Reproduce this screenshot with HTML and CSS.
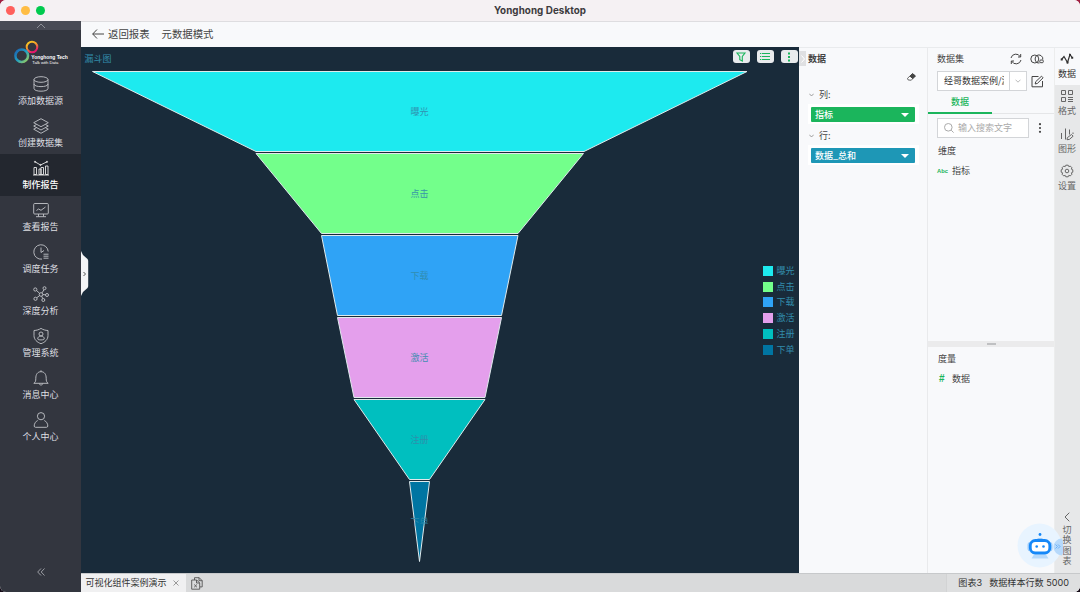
FILE: index.html
```html
<!DOCTYPE html>
<html lang="zh-CN">
<head>
<meta charset="utf-8">
<title>Yonghong Desktop</title>
<link rel="stylesheet" href="styles.css">
</head>
<body>
<div class="window">
  <header class="titlebar">
    <div class="lights"><i class="red"></i><i class="yellow"></i><i class="green"></i></div>
    <h1>Yonghong Desktop</h1>
  </header>
  <div class="body">
    <nav class="sidebar">
      <div class="scroll-up"><svg width="10" height="6" viewBox="0 0 10 6"><path d="M1 5l4-4 4 4"/></svg></div>
      <div class="logo">
        <svg width="60" height="30" viewBox="0 0 60 30">
          <defs>
            <linearGradient id="warm" x1="0" y1="0" x2=".5" y2="1"><stop offset="0" stop-color="#f6d11f"/><stop offset=".5" stop-color="#f39a2b"/><stop offset="1" stop-color="#e5176d"/></linearGradient>
            <linearGradient id="cool" x1="0" y1="0" x2="1" y2="1"><stop offset="0" stop-color="#1d5fae"/><stop offset=".5" stop-color="#1e9fc4"/><stop offset="1" stop-color="#a5d455"/></linearGradient>
          </defs>
          <circle cx="18" cy="8" r="5.300" fill="none" stroke="url(#warm)" stroke-width="2"/>
          <circle cx="7.700" cy="16.700" r="6.300" fill="none" stroke="url(#cool)" stroke-width="2.500"/>
          <text class="brand" x="17.300" y="20" textLength="36.500" lengthAdjust="spacingAndGlyphs">Yonghong Tech</text>
          <text class="motto" x="18.300" y="25.300" textLength="26" lengthAdjust="spacingAndGlyphs">Talk with Data</text>
        </svg>
      </div>
      <a class="item"><svg viewBox="0 0 16 16"><ellipse cx="8" cy="3.500" rx="7" ry="2.800"/><path d="M1 3.500v9c0 3.600 14 3.600 14 0v-9M1 8c0 3.500 14 3.500 14 0"/></svg><span>添加数据源</span></a>
      <a class="item"><svg viewBox="0 0 16 16"><path d="M8 .7l7.300 4L8 8.700l-7.300-4zM3.500 6.500L.7 8 8 12l7.300-4-2.800-1.500M3.500 9.700L.7 11.200 8 15.300l7.300-4.100-2.800-1.500"/></svg><span>创建数据集</span></a>
      <a class="item active"><svg viewBox="0 0 16 16"><path d="M1 7.500h2.500v7H1zM6 9h2v5.500H6zM8 7.500h2.500v7H8zM12.500 6H15v8.500h-2.500zM0 15h16M2 1.800L7.500 5 14 1.800"/><circle cx="2" cy="1.800" r=".6"/><circle cx="7.500" cy="5" r=".6"/><circle cx="14" cy="1.800" r=".6"/></svg><span>制作报告</span></a>
      <a class="item"><svg viewBox="0 0 16 16"><rect x=".7" y="1.500" width="14.600" height="10.500" rx="1"/><path d="M3.500 8.500l2-1.500 2.500 1.300L12.500 5M5.500 12v2.500M10.500 12v2.500M3 14.700h10"/></svg><span>查看报告</span></a>
      <a class="item"><svg viewBox="0 0 16 16"><path d="M15.200 7.500A7.200 7.200 0 1 0 9 15.100M8 3.500v5l3-2M10.500 10.200h5M10.500 12.200h5M10.500 14.200h5"/></svg><span>调度任务</span></a>
      <a class="item"><svg viewBox="0 0 16 16"><circle cx="8" cy="8.500" r="1.800"/><circle cx="2.300" cy="3.500" r="1.600"/><circle cx="11.500" cy="2.200" r="1.500"/><circle cx="14" cy="9" r="1.500"/><circle cx="2.500" cy="12.800" r="1.600"/><circle cx="10.300" cy="14" r="1.500"/><path d="M3.500 4.500l3.100 2.800M11 3.700L9 6.900M9.800 8.600l2.700.2M6.600 9.600l-2.900 2.200M8.700 10.200l1 2.400"/></svg><span>深度分析</span></a>
      <a class="item"><svg viewBox="0 0 16 16"><path d="M8 .4c2 1.300 4.400 2 7 2.100v5c0 4-3 6.800-7 8.200-4-1.400-7-4.200-7-8.200v-5C3.600 2.400 6 1.700 8 .4z"/><circle cx="8" cy="6" r="2"/><path d="M4.700 11c0-4 6.600-4 6.600 0 0 1.200-6.600 1.200-6.600 0z"/></svg><span>管理系统</span></a>
      <a class="item"><svg viewBox="0 0 16 16"><path d="M.8 13.300h14.400c-1.700-1-2-2.300-2-5C13.200 4.500 11.500 1.700 8 1.700S2.800 4.500 2.800 8.300c0 2.700-.3 4-2 5zM8 .3v1.400M6.300 13.500c0 2 3.400 2 3.400 0"/></svg><span>消息中心</span></a>
      <a class="item"><svg viewBox="0 0 16 16"><circle cx="8" cy="4.200" r="3.600"/><path d="M4.700 8.500c-2 .8-3.500 3.200-3.500 5.500 0 .8.500 1.300 1.300 1.300h11c.8 0 1.300-.5 1.300-1.300 0-2.300-1.500-4.700-3.500-5.500"/></svg><span>个人中心</span></a>
      <div class="collapse"><svg width="8" height="8" viewBox="0 0 8 8"><path d="M4 .5L.7 4 4 7.500M7.500.5L4.200 4l3.300 3.500"/></svg></div>
    </nav>

    <div class="main">
      <div class="toolbar">
        <svg width="12" height="10" viewBox="0 0 12 10"><path d="M5 .5L.7 5 5 9.500M.7 5H12"/></svg>
        <span>返回报表</span><span class="mode">元数据模式</span>
      </div>
      <div class="workspace">
        <section class="chart">
          <svg class="funnel" width="718" height="526" viewBox="81 47 718 526">
            <g class="shapes">
              <path fill="#1deaef" d="M92.500 71.500H747L584 151.500H256z"/>
              <path fill="#73ff8b" d="M256 153.500H583.500L518 233.500H321.500z"/>
              <path fill="#2fa3f6" d="M321.500 235.500H518L501.500 315.500H337.500z"/>
              <path fill="#e49fec" d="M337.500 317.500H501.500L485 397.500H354z"/>
              <path fill="#00bfbf" d="M354 399.500H485L429.500 479.500H409.500z"/>
              <path fill="#0075a2" d="M409.500 481.500H429.500L419.500 561.500z"/>
            </g>
            <text class="head" x="84.500" y="62">漏斗图</text>
            <g class="labels">
              <text x="419.500" y="114.500">曝光</text><text x="419.500" y="196.500">点击</text><text x="419.500" y="278.500">下载</text>
              <text x="419.500" y="360.500">激活</text><text x="419.500" y="442.500">注册</text><text x="419.500" y="524.500">下单</text>
            </g>
          </svg>
          <div class="chart-tools">
            <button><svg viewBox="0 0 12 10"><path d="M2 1h8L7.300 4.500V9L4.800 7.700V4.500z"/></svg></button>
            <button><svg viewBox="0 0 12 10"><path d="M1 1.500h1.300M3 1.500h8M1 4.500h1.300M3 4.500h8M1 7.500h1.300M3 7.500h8"/></svg></button>
            <button><svg viewBox="0 0 12 10"><path class="dots" d="M5 .5h2v2H5zM5 4h2v2H5zM5 7.500h2v2H5z"/></svg></button>
          </div>
          <ul class="legend">
            <li><i class="c1"></i>曝光</li><li><i class="c2"></i>点击</li><li><i class="c3"></i>下载</li>
            <li><i class="c4"></i>激活</li><li><i class="c5"></i>注册</li><li><i class="c6"></i>下单</li>
          </ul>
          <svg class="drawer" width="8" height="46" viewBox="0 0 8 46"><path fill="#f4f5f6" d="M0 0l2 4 4.500 4q.7 1 .7 2v25q0 1-.7 2L2 41l-2 4z"/><path fill="none" stroke="#555" d="M2.500 21L4.500 23 2.500 25"/></svg>
        </section>

        <section class="binding">
          <div class="tag"><svg width="4" height="8" viewBox="0 0 4 8"><path d="M.5.5L3.500 4 .5 7.500"/></svg></div>
          <h2>数据</h2>
          <div class="erase"><svg width="9" height="8" viewBox="0 0 9 8"><path d="M5.500.7l2.800 2.200-4 4.300L1.200 7 .5 5.300z" fill="#fff" stroke="#444" stroke-width=".8"/><path fill="#444" d="M5.500.7l2.800 2.200L5.800 5.600 3 3.200z"/></svg></div>
          <div class="field"><svg width="5" height="4" viewBox="0 0 5 4"><path d="M.3.700L2.500 3 4.700.7"/></svg>列:</div>
          <div class="slot"><div class="pill dim">指标<i></i></div></div>
          <div class="field"><svg width="5" height="4" viewBox="0 0 5 4"><path d="M.3.700L2.500 3 4.700.7"/></svg>行:</div>
          <div class="slot"><div class="pill mea">数据_总和<i></i></div></div>
        </section>

        <section class="dataset">
          <div class="ds-head"><span>数据集</span>
            <svg width="12" height="12" viewBox="0 0 12 12"><path d="M1 5a5 5 0 0 1 9.300-1.200M11 7a5 5 0 0 1-9.300 1.200M10.700 1v3H8M1.300 11V8H4"/></svg>
            <svg width="14" height="10" viewBox="0 0 14 10"><circle cx="4.800" cy="5" r="4"/><path d="M6.800 1.500a4 4 0 0 1 6 4M6.800 8.500a4 4 0 0 0 2.700.4M6.800 1.500a4.500 4.500 0 0 0 0 7"/><rect x="9.800" y="6" width="3.500" height="2.700" rx="1"/></svg>
          </div>
          <div class="ds-pick">
            <div class="select"><span>经哥数据案例/漏</span><b><svg width="6" height="4" viewBox="0 0 6 4"><path d="M.5.700L3 3.200 5.500.7"/></svg></b></div>
            <svg width="13" height="13" viewBox="0 0 13 13"><path d="M7.500 1.500H1v10.300h10.500V6M4.200 9l.5-2.300 5.800-5.500 1.600 1.600L6.400 8.400z"/></svg>
          </div>
          <div class="ds-tabs"><span>数据</span></div>
          <div class="search">
            <label><svg width="10" height="10" viewBox="0 0 10 10"><circle cx="4.300" cy="4.300" r="3.800"/><path d="M7.200 7.200L9.600 9.600"/></svg>输入搜索文字</label>
            <svg class="more" width="4" height="10" viewBox="0 0 4 10"><circle cx="2" cy="1.200" r="1.100"/><circle cx="2" cy="5" r="1.100"/><circle cx="2" cy="8.800" r="1.100"/></svg>
          </div>
          <h3>维度</h3>
          <div class="row"><b>Abc</b>指标</div>
          <div class="splitter"><i></i></div>
          <h3 class="measure">度量</h3>
          <div class="row"><b class="hash">#</b>数据</div>
        </section>

        <aside class="rail">
          <a class="on"><svg viewBox="0 0 14 14"><path stroke-width="1.200" d="M1.500 7.500L4 4.500l3.500 6 2.500-8 2 3"/><path d="M.7 6.500h2v2h-2zM6.500 9.500h2v2h-2zM9 2h2v2H9zM11.200 4.700h2v2h-2z" fill="#333" stroke="none"/></svg>数据</a>
          <a><svg viewBox="0 0 14 14"><path d="M1.500 1.500h4v4h-4zM8.500 1.500h4v4h-4zM1.500 8.500h4v4h-4zM8 8.500h5M8 10.500h5M8 12.500h5"/></svg>格式</a>
          <a><svg viewBox="0 0 14 14"><path d="M1.500 6v6M5.500 1.500v11M9.500 2.500v5M13 5.500v1.500M7 12.700l.3-2 4.200-3.200 1.600 1.700-3.700 3.200z"/></svg>图形</a>
          <a><svg viewBox="0 0 14 14"><circle cx="7" cy="7" r="1.800"/><path d="M5.800 1.200h2.400l.6 1.400 1.500-.5 1.600 1.600-.5 1.500 1.400.6v2.400l-1.400.6.5 1.500-1.600 1.600-1.500-.5-.6 1.400H5.800l-.6-1.400-1.500.5-1.600-1.600.5-1.500-1.400-.6V5.800l1.400-.6-.5-1.500 1.600-1.600 1.500.5z"/></svg>设置</a>
          <div class="switch"><svg width="6" height="10" viewBox="0 0 6 10"><path d="M5.300.7L1 5l4.300 4.300"/></svg><span>切换图表</span></div>
        </aside>
        <svg class="robot" width="46" height="46" viewBox="0 0 46 46">
          <circle cx="22.500" cy="22.500" r="22" fill="#e8f4ff"/><path d="M45 15.500a8.500 8.500 0 0 0 0 17A22 22 0 0 0 45 15.500z" fill="#b6d9fb"/><path d="M14.500 35.500l2.500-4h12l2.500 4z" fill="#b6d9fb"/>
          <path d="M38.500 21.500l2 2-2 2M41 21.500l2 2-2 2" fill="none" stroke="#68b0fa"/><rect x="10.500" y="19" width="25" height="9.500" rx="3" fill="#9dccfb"/>
          <rect x="13.300" y="17.500" width="19.500" height="12.500" rx="5" fill="#fff" stroke="#1688f8" stroke-width="2.800"/><path d="M20.500 15.500h5" stroke="#9dccfb"/><circle cx="23" cy="11.500" r="1.400" fill="#1688f8"/><circle cx="19.700" cy="23.500" r="1.300" fill="#1688f8"/><circle cx="26.500" cy="23.500" r="1.300" fill="#1688f8"/>
        </svg>
      </div>
      <footer class="status">
        <div class="sheet">可视化组件案例演示<svg width="6" height="6" viewBox="0 0 6 6"><path d="M.5.5l5 5M5.500.5l-5 5"/></svg></div>
        <svg class="add" width="12" height="13" viewBox="0 0 12 13"><path d="M3.500 3V.7h4.700l3 3v6.200H9M8 .7v3h3.200M.7 3h5l3 3v6.200h-8zM5.500 3v3h3.200M3.200 7.500l2.700 2.700M5.900 7.500l-2.700 2.700"/></svg>
        <p><span>图表3</span><span>数据样本行数 5000</span></p>
      </footer>
    </div>
  </div>
</div>
</body>
</html>
```

FILE: styles.css
```css
* { box-sizing: border-box; }
body { margin: 0; width: 1080px; height: 592px; overflow: hidden; background: linear-gradient(#a01f40 0 40%, #160c18 60%); font: 9px/12px "Noto Sans CJK SC", sans-serif; color: #444; }
svg { fill: none; stroke: currentColor; flex: none; display: block; }
h1, h2, h3, p, ul { margin: 0; padding: 0; font-weight: 400; }
.window { height: 592px; border-radius: 6px; overflow: hidden; display: flex; flex-direction: column; background: #f8f9fb; }
.titlebar { height: 22px; flex: none; background: #f5f1f3; border-bottom: 1px solid #dedde0; display: grid; grid-template-columns: 81px 1fr 81px; align-items: center; }
.titlebar h1 { font: 700 9.8px/20px Inter, sans-serif; text-align: center; letter-spacing: .08px; color: #3d3b3d; }
.lights { display: flex; gap: 6px; padding-left: 6px; }
.lights i { width: 9px; height: 9px; border-radius: 50%; }
.red { background: #ff605c; }
.yellow { background: #ffbd44; }
.green { background: #00ca4e; }
.body { display: flex; flex: 1; min-height: 0; }
.sidebar { width: 81px; margin-top: -1px; background: #33363f; display: flex; flex-direction: column; flex: none; color: #dedfe2; z-index: 1; }
.scroll-up { height: 9px; background: #494b55; display: flex; justify-content: center; align-items: center; color: #8f9198; }
.logo { height: 40px; padding: 9px 0 0 13.500px; }
.logo svg { overflow: visible; }
.logo text { stroke: none; fill: #fff; font-family: "Liberation Sans", sans-serif; }
.brand { font-size: 5.8px; font-weight: 700; }
.motto { font-size: 4px; }
.item { height: 42px; flex: none; display: flex; flex-direction: column; align-items: center; padding-top: 6px; gap: 3.400px; }
.item svg { width: 16px; height: 16px; stroke-width: .9; color: #c3c5ca; }
.active { background: #23272f; color: #fff; font-weight: 500; }
.active svg { color: #e8e8e8; }
.collapse { margin-top: auto; height: 24px; padding-left: 36.500px; color: #9a9ca3; }
.main { flex: 1; display: flex; flex-direction: column; min-width: 0; }
.toolbar { height: 25px; flex: none; display: flex; align-items: center; padding: 0 0 2px 11px; font-size: 10.4px; color: #444; }
.toolbar span { margin-left: 4px; }
.toolbar .mode { margin-left: 12px; }
.workspace { display: flex; height: 526px; position: relative; border-top: 1px solid #e9ebed; }
.chart { width: 718px; flex: none; position: relative; background: #192b3a; margin-top: -1px; }
.funnel text { stroke: none; fill: #328cab; font-size: 9px; }
.shapes { stroke: #dfeaec; stroke-width: 1; }
.labels { text-anchor: middle; opacity: .9; }
.chart-tools { position: absolute; top: 3px; right: 1.500px; display: flex; gap: 7px; }
.chart-tools button { width: 17px; height: 13px; border: 0; border-radius: 3px; background: #e9ebed; color: #1bb55c; padding: 1.5px 2.5px; }
.chart-tools svg { width: 12px; height: 10px; stroke-width: 1.1; }
.dots { fill: currentColor; stroke: none; }
.legend { position: absolute; top: 216px; left: 682px; list-style: none; color: #328cab; }
.legend li { display: flex; align-items: center; gap: 3.500px; height: 15.800px; white-space: nowrap; }
.legend i { width: 10px; height: 10px; }
.c1 { background: #1deaef; }
.c2 { background: #73ff8b; }
.c3 { background: #2fa3f6; }
.c4 { background: #e49fec; }
.c5 { background: #00bfbf; }
.c6 { background: #0075a2; }
.drawer { position: absolute; top: 204px; left: 0; stroke: none; }
.binding { width: 128px; flex: none; padding: 5px 8px 0 9px; position: relative; }
.tag { position: absolute; top: 3px; left: 0; width: 7px; height: 15px; background: #dfe0e2; display: flex; align-items: center; justify-content: center; color: #fff; }
.binding h2 { font-size: 9px; font-weight: 700; line-height: 12px; color: #444; }
.erase { height: 19px; padding: 8px 3px 0; display: flex; justify-content: flex-end; }
.field { display: flex; align-items: center; gap: 5px; padding-left: 1px; height: 13px; margin-top: 4px; color: #444; }
.field svg { color: #888; stroke-width: .8; }
.slot { background: #fff; height: 20px; padding: 3px 4px 2px 3px; margin-top: 3px; margin-bottom: 5px; }
.pill { height: 15px; border-radius: 1px; color: #fff; display: flex; align-items: center; justify-content: space-between; padding: 0 6px 0 4px; font-weight: 500; }
.pill i { border: 4px solid transparent; border-top-color: #fff; border-bottom: 0; }
.dim { background: #1bb55c; }
.mea { background: #1e97b6; }
.dataset { width: 128px; flex: none; border-left: 1px solid #e9eaec; border-right: 1px solid #eceded; display: flex; flex-direction: column; }
.ds-head { display: flex; align-items: center; height: 21px; padding: 0 10px 0 9px; gap: 8px; }
.ds-head span { flex: 1; }
.ds-pick { display: flex; align-items: center; gap: 4px; padding-left: 9px; margin-top: 2px; }
.select { width: 90px; height: 20px; border: 1px solid #d3d5d8; background: #fff; display: flex; align-items: center; color: #333; }
.select span { margin-left: 6px; flex: none; overflow: hidden; white-space: nowrap; width: 60px; }
.select b { margin-left: auto; width: 17px; align-self: stretch; border-left: 1px solid #d3d5d8; display: grid; place-items: center; color: #bbb; }
.ds-tabs { height: 23px; border-bottom: 1px solid #e5e6e8; margin-bottom: 4px; }
.ds-tabs span { display: block; width: 64px; height: 23px; border-bottom: 2px solid #1bb55c; color: #1bb55c; text-align: center; line-height: 22px; font-weight: 500; }
.search { display: flex; align-items: center; gap: 9px; padding-left: 9px; }
.search label { width: 92px; height: 20px; border: 1px solid #d3d5d8; background: #fff; display: flex; align-items: center; gap: 4px; padding-left: 6px; color: #aaa; }
.more { fill: #444; stroke: none; }
.dataset h3 { font-size: 9px; line-height: 12px; margin: 7px 0 0 10px; }
.row { display: flex; align-items: center; height: 12px; margin-top: 8px; }
.row b { width: 15px; margin: 0 0 0 9px; font: 700 5.8px/12px "Liberation Sans", sans-serif; color: #1bb55c; }
.row .hash { font-size: 10px; padding-left: 2px; }
.splitter { height: 6px; background: #ebebec; margin-top: 164px; display: grid; place-items: center; }
.splitter i { width: 9px; height: 2px; background: #bfc0c2; }
.dataset .measure { margin-top: 6px; }
.rail { flex: 1; background: #e7e8e9; display: flex; flex-direction: column; font-size: 9px; color: #666; }
.rail a { height: 37.700px; flex: none; display: flex; flex-direction: column; align-items: center; gap: 2px; padding-top: 4px; line-height: 12px; margin-right: 1px; }
.rail a svg { width: 14px; height: 14px; }
.rail .on { background: #f8f9fb; color: #333; height: 37px; margin-right: 0; padding-right: 1px; }
.switch { margin-top: auto; display: flex; flex-direction: column; align-items: center; gap: 3px; padding-bottom: 6px; margin-right: 1px; }
.switch span { width: 9px; line-height: 10.600px; }
.robot { position: absolute; left: 936px; top: 475px; stroke: none; }
.status { height: 19px; flex: none; display: flex; align-items: center; background: #d9dadb; border-top: 1px solid #c7c9cb; color: #333; }
.sheet { width: 105px; height: 18px; display: flex; align-items: center; gap: 6px; padding-left: 4.500px; background: #f0f0f1; white-space: nowrap; }
.sheet svg { color: #999; }
.add { margin-left: 5px; color: #555; stroke-width: .9; }
.status p { margin-left: auto; align-self: stretch; width: 134px; background: #dedfe0; border-left: 1px solid #d2d3d4; display: flex; align-items: center; justify-content: flex-end; gap: 7px; padding-right: 11px; font: 9.100px/12px Inter, "Noto Sans CJK SC", sans-serif; white-space: nowrap; }
```
